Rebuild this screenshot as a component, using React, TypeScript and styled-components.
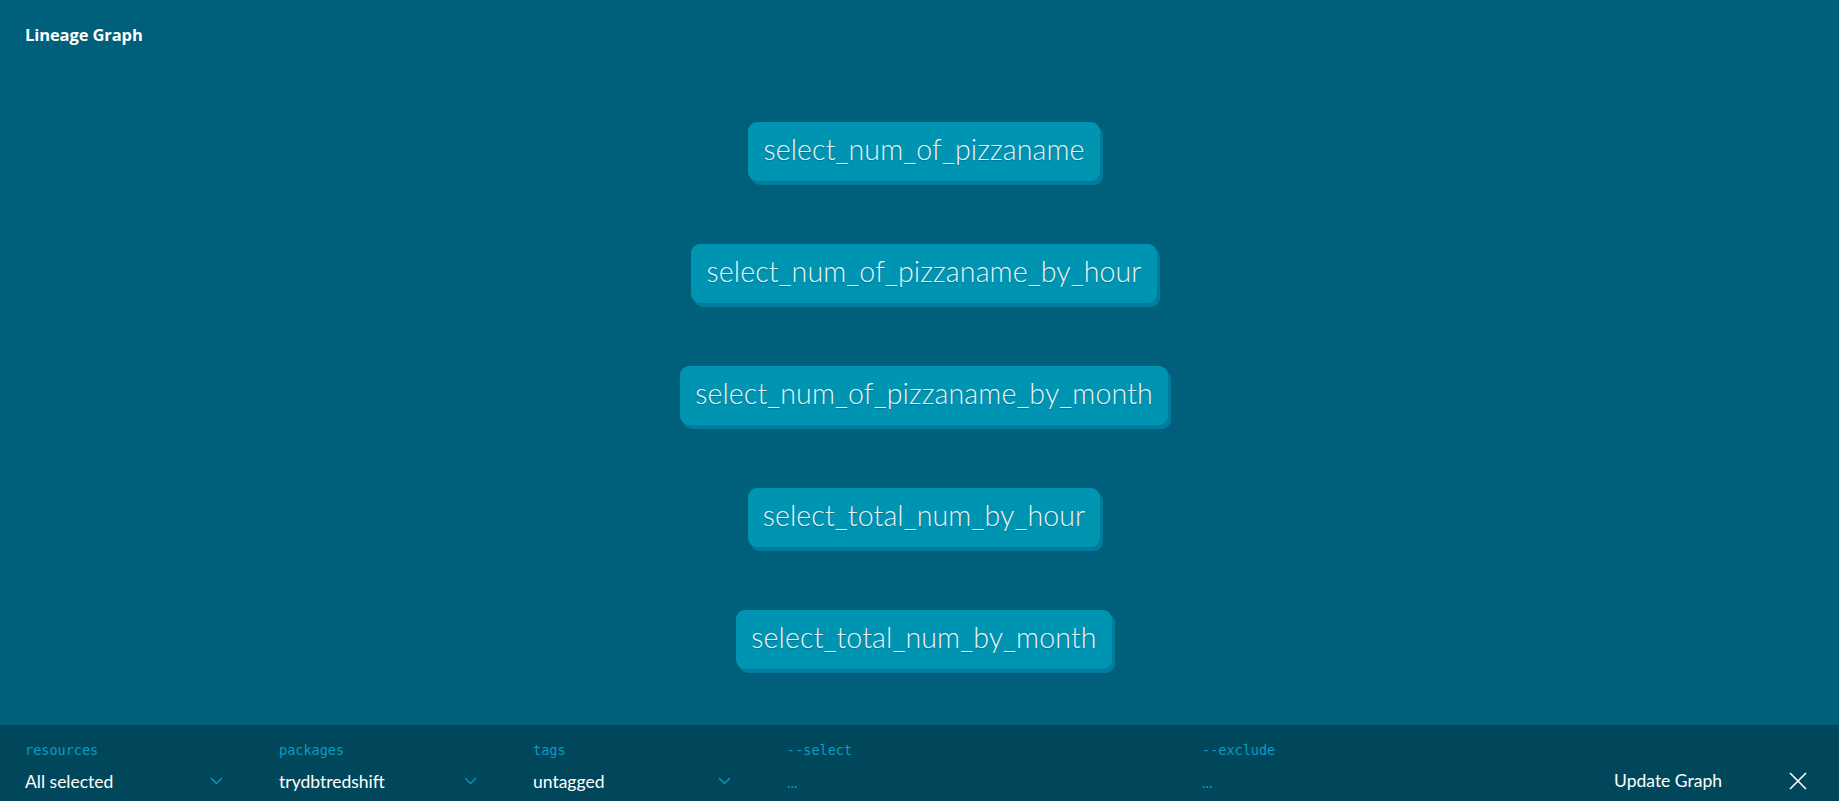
import React, { FC } from 'react'
import styled, { createGlobalStyle } from 'styled-components'

const GlobalStyle = createGlobalStyle`
  html, body {
    margin: 0;
    padding: 0;
    height: 100%;
    background: #005f7a;
  }
  #root {
    height: 100%;
  }
`

const nodes = [
    'select_num_of_pizzaname',
    'select_num_of_pizzaname_by_hour',
    'select_num_of_pizzaname_by_month',
    'select_total_num_by_hour',
    'select_total_num_by_month',
]

const dropdowns = [
    { label: 'resources', value: 'All selected' },
    { label: 'packages', value: 'trydbtredshift' },
    { label: 'tags', value: 'untagged' },
]

const Chevron: FC = () => (
    <svg width="13" height="8" viewBox="0 0 13 8" fill="none">
        <path d="M1 1l5.5 5.5L12 1" stroke="#0a9ac0" strokeWidth="1.3" />
    </svg>
)

const CloseIcon: FC = () => (
    <svg width="20" height="20" viewBox="0 0 20 20" fill="none">
        <path d="M2 2l16 16M18 2L2 18" stroke="#ffffff" strokeWidth="1.6" />
    </svg>
)

const App: FC = () => {
    return (
        <>
            <GlobalStyle />
            <Page>
                <Main>
                    <Title>Lineage Graph</Title>
                    <Canvas>
                        {nodes.map(n => (
                            <Node key={n}>{n}</Node>
                        ))}
                    </Canvas>
                </Main>
                <Footer>
                    {dropdowns.map(d => (
                        <DropColumn key={d.label}>
                            <Label>{d.label}</Label>
                            <Select>
                                <Value>{d.value}</Value>
                                <Chevron />
                            </Select>
                        </DropColumn>
                    ))}
                    <InputColumn>
                        <Label>--select</Label>
                        <Placeholder>...</Placeholder>
                    </InputColumn>
                    <InputColumn $grow>
                        <Label>--exclude</Label>
                        <Placeholder>...</Placeholder>
                    </InputColumn>
                    <Actions>
                        <UpdateButton>Update Graph</UpdateButton>
                        <CloseButton>
                            <CloseIcon />
                        </CloseButton>
                    </Actions>
                </Footer>
            </Page>
        </>
    )
}

export default App

const Page = styled.div`
  width: 100%;
  height: 100vh;
  display: flex;
  flex-direction: column;
  background: #005f7a;
  font-family: Lato, "Open Sans", sans-serif;
  overflow: hidden;
`

const Main = styled.section`
  flex: 1;
  display: flex;
  flex-direction: column;
  padding: 24px 25px 0;
`

const Title = styled.h1`
  margin: 0;
  font-family: "Open Sans", Lato, sans-serif;
  font-size: 16.5px;
  font-weight: 700;
  color: #ffffff;
  line-height: 21px;
  letter-spacing: -0.1px;
`

const Canvas = styled.div`
  display: flex;
  flex-direction: column;
  align-items: center;
  gap: 63px;
  padding: 77px 0 0 9px;
`

const Node = styled.div`
  height: 59px;
  box-sizing: border-box;
  padding: 0 15px 5px;
  display: flex;
  align-items: center;
  border-radius: 9px;
  background: #0094b3;
  box-shadow: 3px 4px 0 #007d9c;
  color: #eaf4f6;
  font-size: 28.6px;
  font-weight: 300;
  letter-spacing: 0.1px;
  text-shadow: 0 1px 1px rgba(0, 60, 80, 0.35);
  white-space: nowrap;
`

const Footer = styled.footer`
  height: 76px;
  flex-shrink: 0;
  box-sizing: border-box;
  background: #00475c;
  display: flex;
  align-items: flex-start;
  padding: 17px 0 0 25px;
`

const DropColumn = styled.div`
  width: 254px;
  flex-shrink: 0;
  display: flex;
  flex-direction: column;
`

const InputColumn = styled.div<{ $grow?: boolean }>`
  width: 415px;
  flex: ${p => (p.$grow ? '1 1 auto' : '0 0 415px')};
  min-width: 0;
  display: flex;
  flex-direction: column;
`

const Label = styled.span`
  font-family: "DejaVu Sans Mono", "Liberation Mono", monospace;
  font-size: 13.5px;
  line-height: 16px;
  color: #0c9cc2;
`

const Select = styled.div`
  width: 198px;
  display: flex;
  align-items: center;
  justify-content: space-between;
  margin-top: 11px;
  height: 24px;
`

const Value = styled.span`
  font-size: 17.5px;
  color: #ffffff;
  white-space: nowrap;
`

const Placeholder = styled.span`
  margin-top: 11px;
  height: 24px;
  line-height: 26px;
  font-size: 15px;
  color: #0c9cc2;
`

const Actions = styled.div`
  flex-shrink: 0;
  display: flex;
  align-items: center;
  gap: 66px;
  padding: 28px 31px 0 0;
`

const UpdateButton = styled.button`
  border: none;
  background: none;
  padding: 0;
  font-family: inherit;
  font-size: 17.5px;
  color: #ffffff;
  white-space: nowrap;
  cursor: pointer;
`

const CloseButton = styled.button`
  border: none;
  background: none;
  padding: 0;
  display: flex;
  cursor: pointer;
`
